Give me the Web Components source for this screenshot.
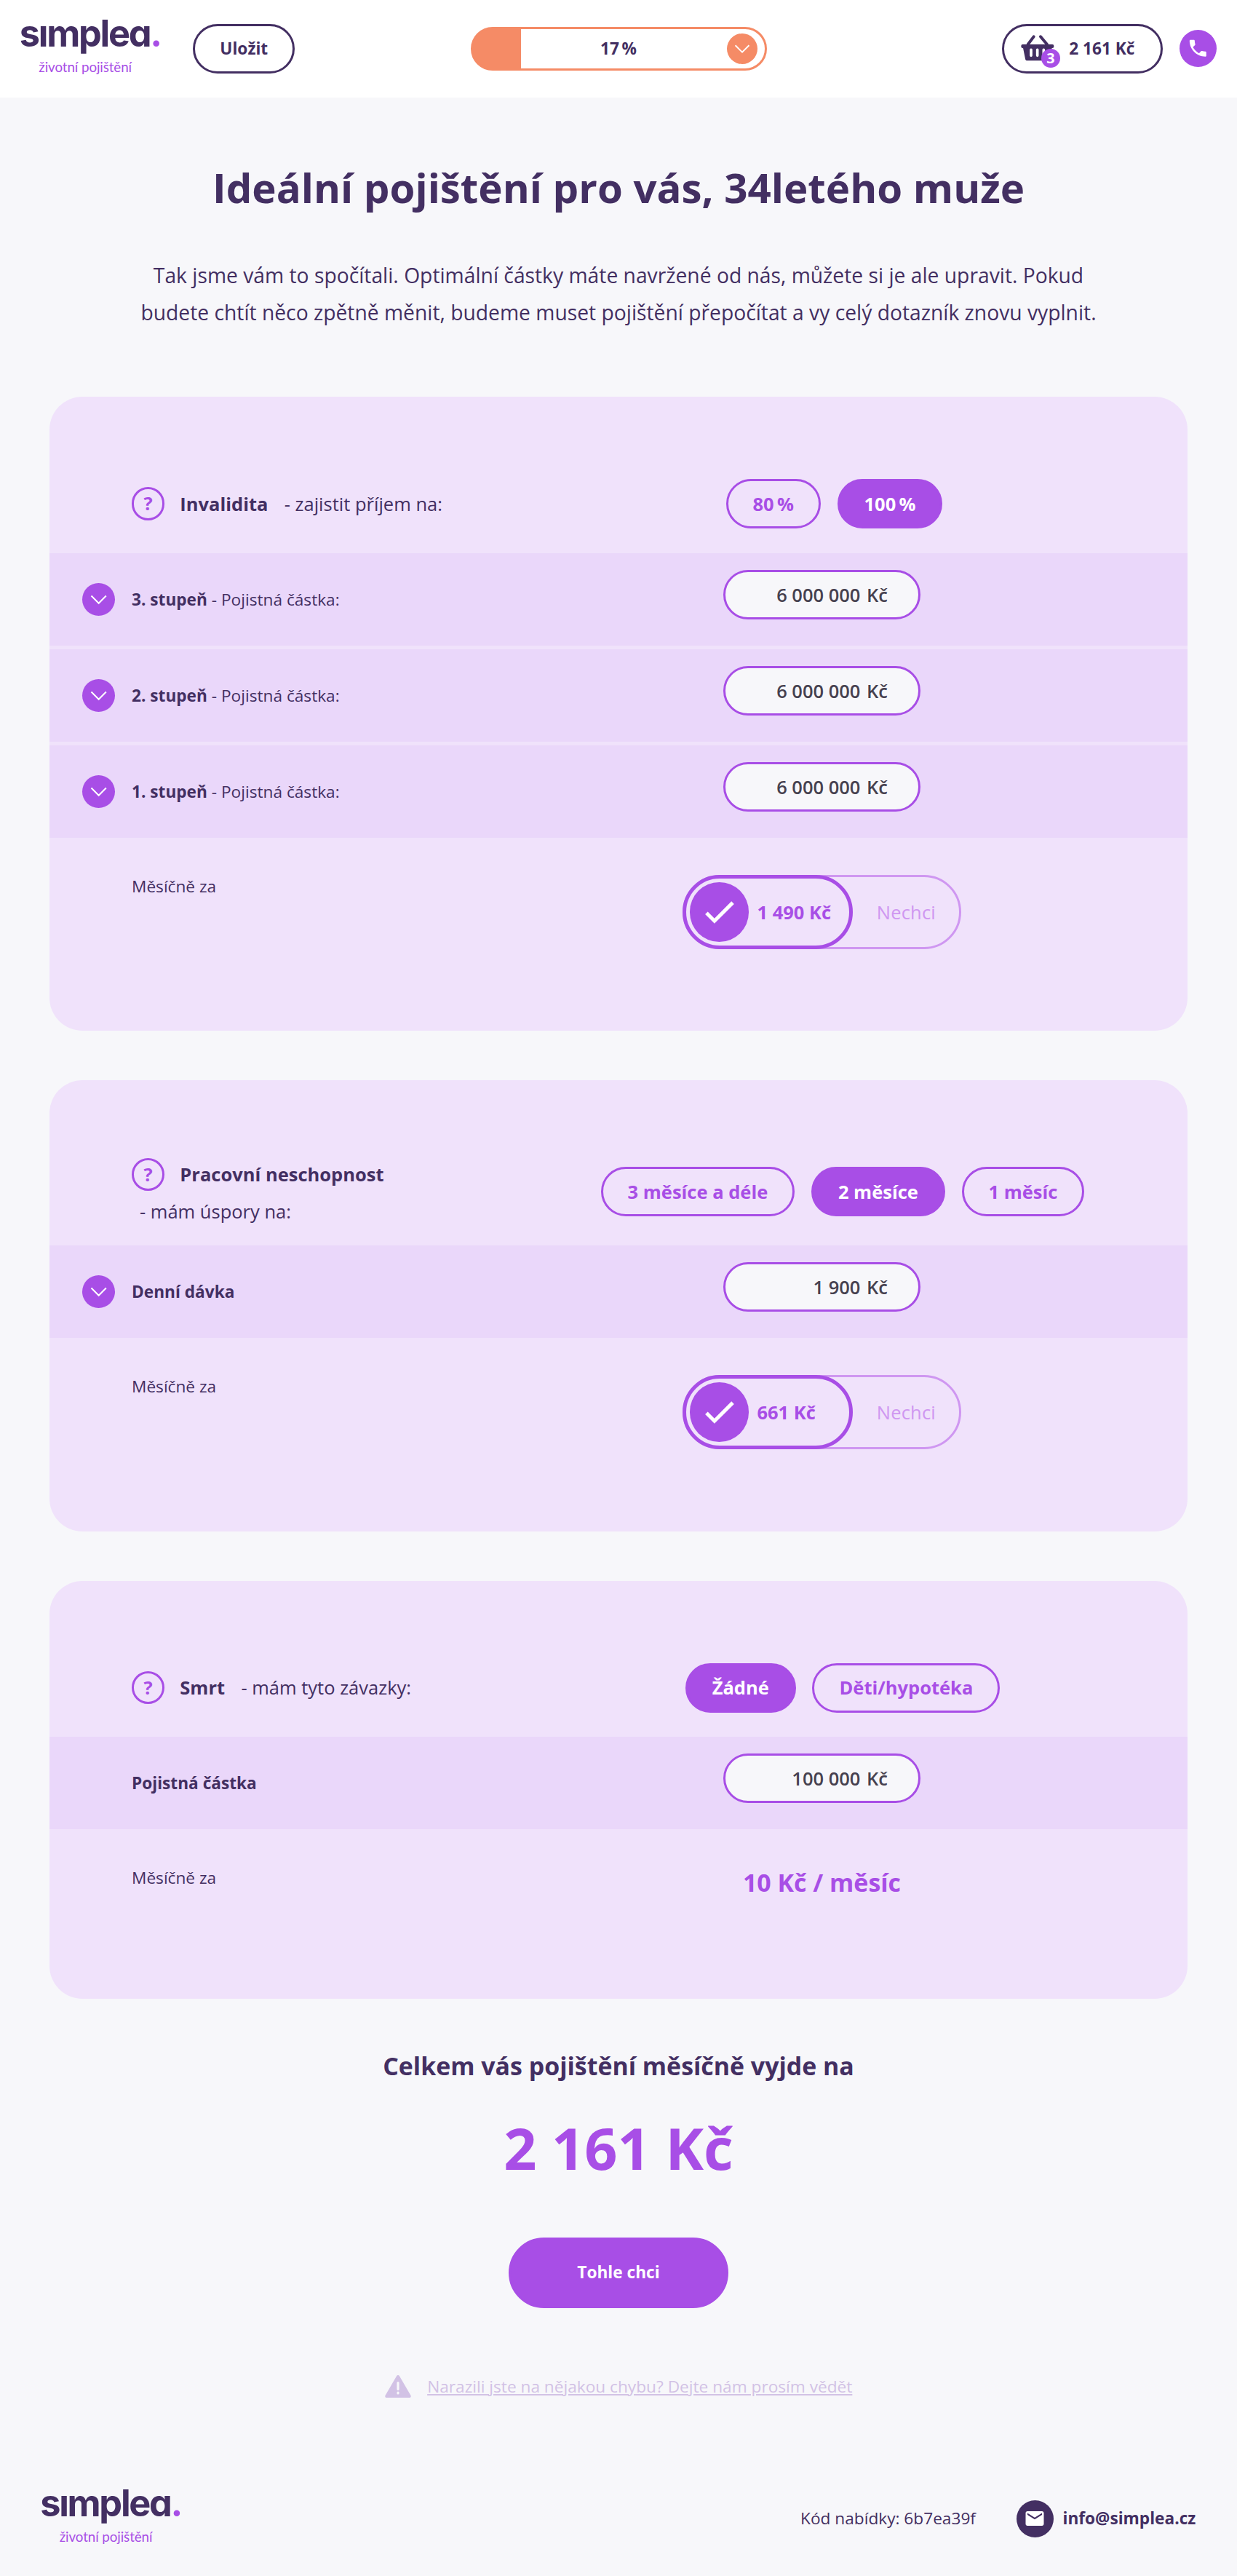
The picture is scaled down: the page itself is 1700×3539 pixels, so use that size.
<!DOCTYPE html>
<html lang="cs">
<head>
<meta charset="utf-8">
<title>Simplea – životní pojištění</title>
<style>
    :root {
        --dark: #432f62;
        --purple: #a84ee6;
        --purple-light: #cf97f1;
        --orange: #f58b66;
        --bg: #f7f7fa;
        --card: #f0e2fb;
        --band: #ead7fa;
        --link: #d2c2e5;
    }

    body {
        margin: 0;
        background: var(--bg);
        color: var(--dark);
        font-family: "Open Sans", "Noto Sans", sans-serif;
        font-size: 22.67px;
        line-height: 1.5;
    }
</style>
</head>
<body>
<simplea-page></simplea-page>

<script>
const ICONS = {
    chevron: '<svg viewBox="0 0 45 45"><path d="M12.4 17.4L22.5 27.6L32.6 17.4" fill="none" stroke="currentColor" stroke-width="2"/></svg>',
    check: '<svg viewBox="0 0 24 24"><path fill="currentColor" d="M9 16.17L4.83 12l-1.62 1.62L9 19.4 21.2 7.2l-1.62-1.62z"/></svg>',
    phone: '<svg viewBox="0 0 24 24"><path fill="currentColor" d="M6.62 10.79c1.44 2.83 3.76 5.14 6.59 6.59l2.2-2.2c.27-.27.67-.36 1.02-.24 1.12.37 2.33.57 3.57.57.55 0 1 .45 1 1V20c0 .55-.45 1-1 1-9.39 0-17-7.61-17-17 0-.55.45-1 1-1h3.5c.55 0 1 .45 1 1 0 1.25.2 2.45.57 3.57.11.35.03.74-.25 1.02l-2.2 2.2z"/></svg>',
    mail: '<svg viewBox="0 0 24 24"><path fill="currentColor" d="M20 4H4c-1.1 0-1.99.9-1.99 2L2 18c0 1.1.9 2 2 2h16c1.1 0 2-.9 2-2V6c0-1.1-.9-2-2-2zm0 4l-8 5-8-5V6l8 5 8-5v2z"/></svg>',
    warning: '<svg viewBox="0 0 36 31"><path fill="currentColor" d="M16.2 1.1c.8-1.4 2.8-1.4 3.6 0l15.7 26.8c.8 1.4-.2 3.1-1.8 3.1H2.3c-1.6 0-2.6-1.7-1.8-3.1z"/><path d="M18 10.5V19.5M18 24.2V25" stroke="#f7f7fa" stroke-width="3.2" stroke-linecap="round"/></svg>',
    basket: '<svg viewBox="160 108 140 112"><path d="M213 118L189 150M241 118L268 150" stroke="currentColor" stroke-width="12" stroke-linecap="round"/><rect x="161" y="150" width="135" height="15" rx="6" fill="currentColor"/><path d="M168 160H289L279 209Q278 217 270 217H187Q179 217 178 209Z" fill="currentColor"/><path d="M202 172V196M228 172V196M254 172V196" stroke="#fff" stroke-width="11" stroke-linecap="round"/></svg>'
};

class SimpleaLogo extends HTMLElement {
    connectedCallback() {
        this.attachShadow({ mode: 'open' }).innerHTML = `
            <style>
                :host {
                    display: block;
                    width: 200px;
                    white-space: nowrap;
                }

                .word {
                    font: 700 50.5px/48px Inter, sans-serif;
                    font-feature-settings: "cv11";
                    letter-spacing: -2.3px;
                    color: var(--dark);
                }

                .word span {
                    color: var(--purple);
                }

                .tagline {
                    margin: 10px 0 0 26.5px;
                    font: 400 18.8px/24px Lato, sans-serif;
                    letter-spacing: -0.1px;
                    color: var(--purple);
                }
            </style>
            <div class="word">sımplea<span>.</span></div>
            <div class="tagline">životní pojištění</div>
        `;
    }
}

class RoundIcon extends HTMLElement {
    connectedCallback() {
        this.attachShadow({ mode: 'open' }).innerHTML = `
            <style>
                :host {
                    display: flex;
                    flex: none;
                    align-items: center;
                    justify-content: center;
                    box-sizing: border-box;
                    width: 45.33px;
                    height: 45.33px;
                    border-radius: 50%;
                    background: var(--purple);
                    color: #fff;
                }

                svg {
                    display: block;
                    width: var(--glyph, 100%);
                    height: var(--glyph, 100%);
                }
            </style>
            ${ICONS[this.getAttribute('icon')] || ''}
        `;
    }
}

class PillButton extends HTMLElement {
    connectedCallback() {
        this.attachShadow({ mode: 'open' }).innerHTML = `
            <style>
                :host {
                    display: flex;
                    align-items: center;
                    justify-content: center;
                    box-sizing: border-box;
                    height: 68px;
                    padding: 0 34px;
                    border: 3px solid var(--purple);
                    border-radius: 34px;
                    color: var(--purple);
                    font-size: 25.5px;
                    font-weight: 700;
                    white-space: nowrap;
                    cursor: pointer;
                }

                :host([active]) {
                    background: var(--purple);
                    color: #fff;
                }

                :host([dark]) {
                    border-color: var(--dark);
                    color: var(--dark);
                    font-size: 22.67px;
                }

                :host([big]) {
                    width: 302px;
                    height: 97px;
                    border-radius: 49px;
                    font-size: 22.67px;
                }
            </style>
            <slot></slot>
        `;
    }
}

class ProgressPill extends HTMLElement {
    connectedCallback() {
        const value = this.getAttribute('value');
        this.attachShadow({ mode: 'open' }).innerHTML = `
            <style>
                :host {
                    display: grid;
                    grid-template-columns: 1fr auto 1fr;
                    align-items: center;
                    box-sizing: border-box;
                    width: 407px;
                    height: 60px;
                    padding-right: 10px;
                    border: 3px solid var(--orange);
                    border-radius: 30px;
                    background: linear-gradient(90deg, var(--orange) ${value}%, #fff ${value}%) border-box;
                    font-weight: 700;
                }

                span {
                    grid-column: 2;
                    padding-left: 10px;
                }

                round-icon {
                    justify-self: end;
                    width: 42px;
                    height: 42px;
                    background: var(--orange);
                }
            </style>
            <span>${value}&#8201;%</span>
            <round-icon icon="chevron"></round-icon>
        `;
    }
}

class BasketPill extends HTMLElement {
    connectedCallback() {
        this.attachShadow({ mode: 'open' }).innerHTML = `
            <style>
                :host {
                    display: flex;
                    align-items: center;
                    box-sizing: border-box;
                    width: 221px;
                    height: 68px;
                    padding-left: 22.5px;
                    border: 3px solid var(--dark);
                    border-radius: 34px;
                    font-weight: 700;
                    white-space: nowrap;
                }

                .icon {
                    position: relative;
                    width: 46.67px;
                    height: 37.33px;
                    margin: 0 20px 2px 0;
                }

                svg {
                    display: block;
                    width: 100%;
                    height: 100%;
                }

                .count {
                    position: absolute;
                    left: 28.5px;
                    top: 20px;
                    width: 26px;
                    height: 26px;
                    border-radius: 50%;
                    background: var(--purple);
                    color: #fff;
                    font-size: 19.8px;
                    line-height: 26px;
                    text-align: center;
                }
            </style>
            <div class="icon">${ICONS.basket}<div class="count">${this.getAttribute('count')}</div></div>
            <slot></slot>
        `;
    }
}

class PageHeader extends HTMLElement {
    connectedCallback() {
        this.attachShadow({ mode: 'open' }).innerHTML = `
            <style>
                :host {
                    display: grid;
                    grid-template-columns: 1fr auto 1fr;
                    align-items: center;
                    box-sizing: border-box;
                    height: 134px;
                    padding: 0 28.33px 1px;
                    background: #fff;
                }

                .left, .right {
                    display: flex;
                    align-items: center;
                }

                .left {
                    align-self: stretch;
                }

                .right {
                    justify-content: flex-end;
                    gap: 22.67px;
                }

                simplea-logo {
                    align-self: flex-start;
                    margin: 21.5px 38.5px 0 -1.5px;
                }

                .phone {
                    --glyph: 30.6px;
                    width: 51px;
                    height: 51px;
                }
            </style>
            <div class="left">
                <simplea-logo></simplea-logo>
                <pill-button dark>Uložit</pill-button>
            </div>
            <progress-pill value="17"></progress-pill>
            <div class="right">
                <basket-pill count="3">2 161 Kč</basket-pill>
                <round-icon class="phone" icon="phone"></round-icon>
            </div>
        `;
    }
}

class InsuranceCard extends HTMLElement {
    connectedCallback() {
        this.attachShadow({ mode: 'open' }).innerHTML = `
            <style>
                :host {
                    display: flex;
                    flex-direction: column;
                    margin: 0 68px;
                    border-radius: 45.33px;
                    background: var(--card);
                    overflow: hidden;
                }

                .bands {
                    display: flex;
                    flex-direction: column;
                    gap: 5px;
                }

                .head, .foot {
                    display: grid;
                    grid-template-columns: 560px 777px;
                    box-sizing: border-box;
                    padding-left: 113px;
                }

                .head {
                    height: var(--head, 215px);
                    padding-top: 79.3px;
                    align-items: center;
                    font-size: 25.5px;
                    line-height: 51px;
                }

                .title {
                    display: flex;
                    flex-wrap: wrap;
                    align-items: center;
                    padding-top: var(--title-top, 0);
                }

                .help {
                    flex: none;
                    box-sizing: border-box;
                    width: 45.33px;
                    height: 45.33px;
                    border: 3px solid var(--purple);
                    border-radius: 50%;
                    color: var(--purple);
                    font-weight: 700;
                    line-height: 39px;
                    text-align: center;
                }

                strong {
                    margin: 0 11.33px 0 21px;
                }

                .note {
                    margin-left: 11px;
                }

                .options {
                    display: flex;
                    justify-content: center;
                    gap: 22.67px;
                    margin-left: var(--shift, 57px);
                }

                .foot {
                    height: var(--foot, 266px);
                    padding-top: 51px;
                    align-items: start;
                }

                .foot > span {
                    line-height: 31px;
                }

                .price {
                    display: flex;
                    justify-content: center;
                }
            </style>
            <div class="head">
                <div class="title">
                    <div class="help">?</div>
                    <strong>${this.getAttribute('name')}</strong>
                    <span class="note">${this.getAttribute('note')}</span>
                </div>
                <div class="options"><slot name="option"></slot></div>
            </div>
            <div class="bands"><slot></slot></div>
            <div class="foot">
                <span>Měsíčně za</span>
                <div class="price"><slot name="price"></slot></div>
            </div>
        `;
    }
}

class AmountRow extends HTMLElement {
    connectedCallback() {
        this.attachShadow({ mode: 'open' }).innerHTML = `
            <style>
                :host {
                    display: grid;
                    grid-template-columns: 113px 560px 777px;
                    align-items: center;
                    height: 127px;
                    background: var(--band);
                }

                round-icon {
                    margin-left: 45px;
                }

                .label {
                    grid-column: 2;
                }

                .amount {
                    justify-self: center;
                    box-sizing: border-box;
                    width: 271px;
                    height: 68px;
                    margin-bottom: 14px;
                    padding-right: 42px;
                    border: 3px solid var(--purple);
                    border-radius: 34px;
                    background: var(--bg);
                    color: #46414f;
                    font-size: 25.5px;
                    font-weight: 600;
                    line-height: 62px;
                    text-align: right;
                }

                .unit {
                    margin-left: 2px;
                }
            </style>
            ${this.hasAttribute('expandable') ? '<round-icon icon="chevron"></round-icon>' : ''}
            <div class="label"><slot></slot></div>
            <div class="amount">${this.getAttribute('amount')} <span class="unit">Kč</span></div>
        `;
    }
}

class PriceToggle extends HTMLElement {
    connectedCallback() {
        this.attachShadow({ mode: 'open' }).innerHTML = `
            <style>
                :host {
                    display: flex;
                    align-items: center;
                    justify-content: space-between;
                    box-sizing: border-box;
                    width: 383px;
                    height: 101.5px;
                    border: 3px solid var(--purple-light);
                    border-radius: 51px;
                    font-size: 25.5px;
                }

                .on {
                    display: flex;
                    align-items: center;
                    box-sizing: border-box;
                    width: 234px;
                    height: 101.5px;
                    margin: -3px;
                    padding-left: 4.5px;
                    border: 5px solid var(--purple);
                    border-radius: 51px;
                    color: var(--purple);
                    font-weight: 700;
                }

                round-icon {
                    --glyph: 53px;
                    width: 81.6px;
                    height: 81.6px;
                    margin-right: 11.33px;
                }

                .off {
                    margin-right: 32px;
                    color: var(--purple-light);
                    letter-spacing: 0.2px;
                }
            </style>
            <div class="on"><round-icon icon="check"></round-icon><slot></slot></div>
            <div class="off">Nechci</div>
        `;
    }
}

class PageFooter extends HTMLElement {
    connectedCallback() {
        this.attachShadow({ mode: 'open' }).innerHTML = `
            <style>
                :host {
                    display: flex;
                    align-items: flex-start;
                    height: 123.5px;
                    padding: 0 56.67px 0 55.2px;
                    box-sizing: border-box;
                }

                .contact {
                    display: flex;
                    align-items: center;
                    margin: 19.5px 0 0 auto;
                }

                round-icon {
                    --glyph: 30px;
                    width: 51px;
                    height: 51px;
                    margin: 0 13px 0 55.5px;
                    background: var(--dark);
                }
            </style>
            <simplea-logo></simplea-logo>
            <div class="contact">
                <span>Kód nabídky: 6b7ea39f</span>
                <round-icon icon="mail"></round-icon>
                <b>info@simplea.cz</b>
            </div>
        `;
    }
}

class SimpleaPage extends HTMLElement {
    connectedCallback() {
        this.attachShadow({ mode: 'open' }).innerHTML = `
            <style>
                :host {
                    display: block;
                }

                h1 {
                    margin: 90px 0 60.5px;
                    font-size: 56.4px;
                    line-height: 68px;
                    text-align: center;
                }

                .intro {
                    width: 1360px;
                    margin: 0 auto 90.5px;
                    font-size: 28.25px;
                    line-height: 51px;
                    text-align: center;
                }

                .cards {
                    display: flex;
                    flex-direction: column;
                    gap: 68px;
                }

                .monthly {
                    color: var(--purple);
                    font-size: 33.9px;
                    font-weight: 700;
                    line-height: 45px;
                }

                .summary {
                    display: flex;
                    flex-direction: column;
                    align-items: center;
                    height: 669px;
                }

                h2 {
                    margin: 68px 0 0;
                    font-size: 33.9px;
                    line-height: 48px;
                }

                .total {
                    margin: 37.5px 0 74px;
                    color: var(--purple);
                    font-size: 79.2px;
                    font-weight: 700;
                    line-height: 100px;
                }

                .report {
                    display: flex;
                    align-items: center;
                    gap: 22.5px;
                    margin-top: 91px;
                    color: var(--link);
                    text-decoration: underline;
                }

                .report svg {
                    width: 36px;
                    height: 31px;
                }
            </style>
            <page-header></page-header>
            <h1>Ideální pojištění pro vás, 34letého muže</h1>
            <div class="intro">Tak jsme vám to spočítali. Optimální částky máte navržené od nás, můžete si je ale upravit. Pokud budete chtít něco zpětně měnit, budeme muset pojištění přepočítat a vy celý dotazník znovu vyplnit.</div>

            <div class="cards">
                <insurance-card name="Invalidita" note="- zajistit příjem na:" style="--shift: 34px; --foot: 265px">
                    <pill-button slot="option">80&#8201;%</pill-button>
                    <pill-button slot="option" active>100&#8201;%</pill-button>
                    <amount-row expandable amount="6 000 000"><b>3. stupeň</b> - Pojistná částka:</amount-row>
                    <amount-row expandable amount="6 000 000"><b>2. stupeň</b> - Pojistná částka:</amount-row>
                    <amount-row expandable amount="6 000 000"><b>1. stupeň</b> - Pojistná částka:</amount-row>
                    <price-toggle slot="price">1 490 Kč</price-toggle>
                </insurance-card>

                <insurance-card name="Pracovní neschopnost" note="- mám úspory na:" style="--head: 227px; --title-top: 4px">
                    <pill-button slot="option">3 měsíce a déle</pill-button>
                    <pill-button slot="option" active>2 měsíce</pill-button>
                    <pill-button slot="option">1 měsíc</pill-button>
                    <amount-row expandable amount="1 900"><b>Denní dávka</b></amount-row>
                    <price-toggle slot="price">661 Kč</price-toggle>
                </insurance-card>

                <insurance-card name="Smrt" note="- mám tyto závazky:" style="--head: 214px; --foot: 233px">
                    <pill-button slot="option" active>Žádné</pill-button>
                    <pill-button slot="option">Děti/hypotéka</pill-button>
                    <amount-row amount="100 000"><b>Pojistná částka</b></amount-row>
                    <div class="monthly" slot="price">10 Kč / měsíc</div>
                </insurance-card>
            </div>

            <div class="summary">
                <h2>Celkem vás pojištění měsíčně vyjde na</h2>
                <div class="total">2 161 Kč</div>
                <pill-button big active>Tohle chci</pill-button>
                <div class="report">${ICONS.warning}<span>Narazili jste na nějakou chybu? Dejte nám prosím vědět</span></div>
            </div>
            <page-footer></page-footer>
        `;
    }
}

customElements.define('simplea-logo', SimpleaLogo);
customElements.define('round-icon', RoundIcon);
customElements.define('pill-button', PillButton);
customElements.define('progress-pill', ProgressPill);
customElements.define('basket-pill', BasketPill);
customElements.define('page-header', PageHeader);
customElements.define('insurance-card', InsuranceCard);
customElements.define('amount-row', AmountRow);
customElements.define('price-toggle', PriceToggle);
customElements.define('page-footer', PageFooter);
customElements.define('simplea-page', SimpleaPage);
</script>
</body>
</html>
